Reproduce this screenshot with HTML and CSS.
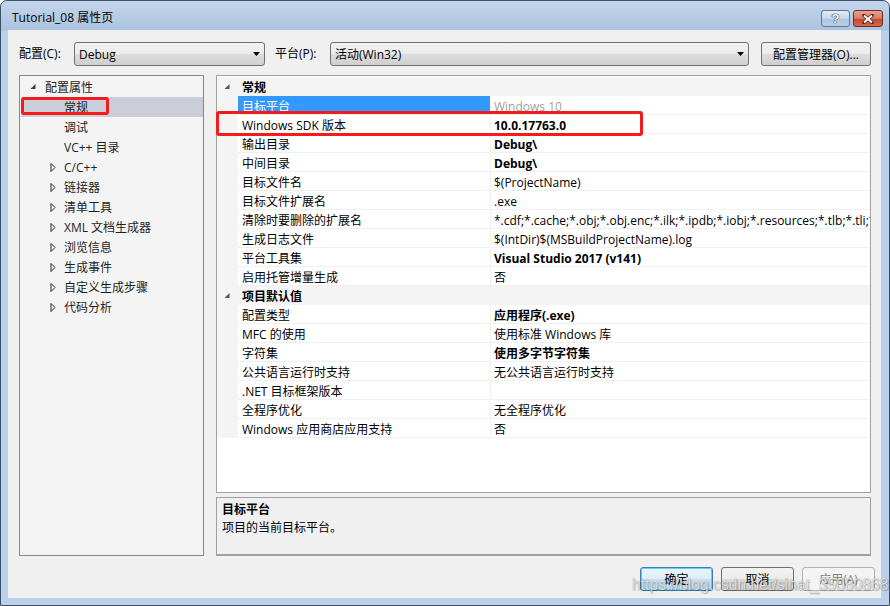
FILE: index.html
```html
<!DOCTYPE html>
<html lang="zh-CN">
<head>
	<meta charset="UTF-8">
	<title>Tutorial_08 属性页</title>
	<link rel="stylesheet" href="styles.css">
</head>
<body>
	<div class="window">
		<div class="titlebar">
			<span class="title">Tutorial_08 属性页</span>
			<div class="caption">
				<span class="cap-btn help">?</span>
				<span class="cap-btn close">
					<svg width="14" height="10" viewBox="0 0 14 10"><path d="M3 1.5 L11 8.5 M11 1.5 L3 8.5" stroke="#5a2020" stroke-width="3.6" stroke-linecap="round"/><path d="M3 1.5 L11 8.5 M11 1.5 L3 8.5" stroke="#fff" stroke-width="2"/></svg>
				</span>
			</div>
		</div>
		<div class="client">
			<div class="toolbar">
				<span class="lbl lbl-config">配置(C):</span>
				<div class="combo combo-config"><span>Debug</span><svg class="arrow" width="7" height="4"><polygon points="0,0 7,0 3.5,4" fill="#000"/></svg></div>
				<span class="lbl lbl-plat">平台(P):</span>
				<div class="combo combo-plat"><span>活动(Win32)</span><svg class="arrow" width="7" height="4"><polygon points="0,0 7,0 3.5,4" fill="#000"/></svg></div>
				<span class="btn btn-mgr">配置管理器(O)...</span>
			</div>

			<div class="main">
				<div class="tree">
					<div class="node l0"><svg class="tw" width="15" height="8"><polygon points="5.5,1 5.5,6 0.5,6" fill="#3c3c3c"/></svg>配置属性</div>
					<div class="node l1 selected"><span class="tw"></span>常规</div>
					<div class="node l1"><span class="tw"></span>调试</div>
					<div class="node l1"><span class="tw"></span>VC++ 目录</div>
					<div class="node l1"><svg class="tw" width="15" height="9"><polygon points="1,0.5 5,4.5 1,8.5" fill="#fff" stroke="#222"/></svg>C/C++</div>
					<div class="node l1"><svg class="tw" width="15" height="9"><polygon points="1,0.5 5,4.5 1,8.5" fill="#fff" stroke="#222"/></svg>链接器</div>
					<div class="node l1"><svg class="tw" width="15" height="9"><polygon points="1,0.5 5,4.5 1,8.5" fill="#fff" stroke="#222"/></svg>清单工具</div>
					<div class="node l1"><svg class="tw" width="15" height="9"><polygon points="1,0.5 5,4.5 1,8.5" fill="#fff" stroke="#222"/></svg>XML 文档生成器</div>
					<div class="node l1"><svg class="tw" width="15" height="9"><polygon points="1,0.5 5,4.5 1,8.5" fill="#fff" stroke="#222"/></svg>浏览信息</div>
					<div class="node l1"><svg class="tw" width="15" height="9"><polygon points="1,0.5 5,4.5 1,8.5" fill="#fff" stroke="#222"/></svg>生成事件</div>
					<div class="node l1"><svg class="tw" width="15" height="9"><polygon points="1,0.5 5,4.5 1,8.5" fill="#fff" stroke="#222"/></svg>自定义生成步骤</div>
					<div class="node l1"><svg class="tw" width="15" height="9"><polygon points="1,0.5 5,4.5 1,8.5" fill="#fff" stroke="#222"/></svg>代码分析</div>
					<div class="mark mark-tree"></div>
				</div>

				<div class="right">
					<div class="grid">
						<div class="cat"><span class="gutter"><svg width="21" height="8"><polygon points="12.5,1 12.5,6 7.5,6" fill="#555"/></svg></span><span class="cat-name">常规</span></div>
						<div class="row"><span class="gutter"></span><span class="name sel">目标平台</span><span class="value dim">Windows 10</span></div>
						<div class="row"><span class="gutter"></span><span class="name">Windows SDK 版本</span><span class="value b">10.0.17763.0</span></div>
						<div class="row"><span class="gutter"></span><span class="name">输出目录</span><span class="value b">Debug\</span></div>
						<div class="row"><span class="gutter"></span><span class="name">中间目录</span><span class="value b">Debug\</span></div>
						<div class="row"><span class="gutter"></span><span class="name">目标文件名</span><span class="value">$(ProjectName)</span></div>
						<div class="row"><span class="gutter"></span><span class="name">目标文件扩展名</span><span class="value">.exe</span></div>
						<div class="row"><span class="gutter"></span><span class="name">清除时要删除的扩展名</span><span class="value">*.cdf;*.cache;*.obj;*.obj.enc;*.ilk;*.ipdb;*.iobj;*.resources;*.tlb;*.tli;*.tlh;*.tmp;*.rsp;*.pgc;*.pgd;*.meta;*.tlog</span></div>
						<div class="row"><span class="gutter"></span><span class="name">生成日志文件</span><span class="value">$(IntDir)$(MSBuildProjectName).log</span></div>
						<div class="row"><span class="gutter"></span><span class="name">平台工具集</span><span class="value b">Visual Studio 2017 (v141)</span></div>
						<div class="row"><span class="gutter"></span><span class="name">启用托管增量生成</span><span class="value">否</span></div>
						<div class="cat"><span class="gutter"><svg width="21" height="8"><polygon points="12.5,1 12.5,6 7.5,6" fill="#555"/></svg></span><span class="cat-name">项目默认值</span></div>
						<div class="row"><span class="gutter"></span><span class="name">配置类型</span><span class="value b">应用程序(.exe)</span></div>
						<div class="row"><span class="gutter"></span><span class="name">MFC 的使用</span><span class="value">使用标准 Windows 库</span></div>
						<div class="row"><span class="gutter"></span><span class="name">字符集</span><span class="value b">使用多字节字符集</span></div>
						<div class="row"><span class="gutter"></span><span class="name">公共语言运行时支持</span><span class="value">无公共语言运行时支持</span></div>
						<div class="row"><span class="gutter"></span><span class="name">.NET 目标框架版本</span><span class="value"></span></div>
						<div class="row"><span class="gutter"></span><span class="name">全程序优化</span><span class="value">无全程序优化</span></div>
						<div class="row"><span class="gutter"></span><span class="name">Windows 应用商店应用支持</span><span class="value">否</span></div>
						<div class="mark mark-grid"></div>
					</div>
					<div class="desc">
						<div class="desc-title">目标平台</div>
						<div class="desc-text">项目的当前目标平台。</div>
					</div>
				</div>
			</div>

			<div class="footer">
				<span class="btn btn-ok">确定</span>
				<span class="btn">取消</span>
				<span class="btn disabled">应用(A)</span>
				<span class="watermark">https://blog.csdn.net/sinat_35080868</span>
			</div>
		</div>
	</div>
</body>
</html>
```

FILE: styles.css
```css
*{
	margin: 0;
	padding: 0;
	box-sizing: border-box;
}
body{
	font-family: "Open Sans", "Noto Sans CJK SC", sans-serif;
	font-size: 12px;
	color: #000;
	background-color: #fff;
}
.window{
	width: 890px;
	height: 606px;
	display: flex;
	flex-direction: column;
	padding: 0 8px 7px 7px;
	border: 1px solid #3d4f66;
	border-radius: 7px 7px 0 0;
	background: linear-gradient(#c3d6ed, #aac3df 29px, #b9d1ea 30px);
	overflow: hidden;
}
.titlebar{
	height: 29px;
	flex: none;
	display: flex;
	justify-content: space-between;
	align-items: flex-start;
}
.title{
	margin: 8px 0 0 4px;
	line-height: 18px;
	color: #000;
}
.caption{
	display: flex;
	gap: 3px;
	margin: 9px -2px 0 0;
}
.cap-btn{
	height: 17px;
	display: flex;
	align-items: center;
	justify-content: center;
	border-radius: 3px;
}
.help{
	width: 29px;
	border: 1px solid #5f7592;
	background: linear-gradient(#e4ecf6, #c5d6ea 50%, #afc5df 51%, #bcd0e8);
	color: #fff;
	font-family: "Liberation Sans", sans-serif;
	font-weight: bold;
	font-size: 13px;
	text-shadow: 0 0 1px #33465d, 0 0 1px #33465d, 0 0 1px #33465d;
}
.close{
	width: 30px;
	border: 1px solid #6e2a22;
	background: linear-gradient(#e8a592, #d7775f 50%, #c5452a 51%, #d4694c);
}
.client{
	flex: 1;
	min-width: 0;
	display: flex;
	flex-direction: column;
	padding: 12px 10px 0 11px;
	background-color: #f0f0f0;
}
.toolbar{
	height: 24px;
	display: flex;
	align-items: center;
}
.lbl{
	line-height: 18px;
	white-space: nowrap;
}
.lbl-config{
	width: 55px;
}
.lbl-plat{
	width: 55px;
	margin-left: 10px;
}
.combo{
	height: 24px;
	flex: none;
	display: flex;
	align-items: center;
	justify-content: space-between;
	padding: 0 4px 0 4px;
	border: 1px solid #707070;
	border-radius: 3px;
	background: linear-gradient(#f2f2f2, #ebebeb 50%, #dddddd 51%, #cfcfcf);
}
.combo-config{
	width: 191px;
}
.combo-plat{
	width: 419px;
}
.btn{
	height: 24px;
	width: 73px;
	flex: none;
	display: flex;
	align-items: center;
	justify-content: center;
	border: 1px solid #707070;
	border-radius: 3px;
	background: linear-gradient(#f2f2f2, #ebebeb 50%, #dddddd 51%, #cfcfcf);
	white-space: nowrap;
}
.btn-mgr{
	width: 110px;
	margin-left: 12px;
}
.main{
	height: 481px;
	flex: none;
	margin-top: 9px;
	display: flex;
	gap: 12px;
}
.tree{
	position: relative;
	width: 185px;
	flex: none;
	padding-top: 1px;
	border: 1px solid #828790;
	background-color: #f4f4f4;
	color: #1e1e1e;
}
.node{
	height: 20px;
	display: flex;
	align-items: center;
	white-space: nowrap;
}
.node.l0{
	padding-left: 10px;
}
.node.l1{
	padding-left: 30px;
}
.node .tw{
	width: 15px;
	flex: none;
}
.node.l1 .tw{
	width: 14px;
}
.node.selected{
	margin-left: 1px;
	padding-left: 29px;
	background-color: #cbcdd8;
}
.mark{
	position: absolute;
	border: 3px solid #f21c1c;
	border-radius: 3px;
}
.mark-tree{
	left: 1px;
	top: 21px;
	width: 88px;
	height: 18px;
}
.mark-grid{
	left: -1px;
	top: 35px;
	width: 427px;
	height: 25px;
}
.right{
	flex: 1;
	min-width: 0;
	display: flex;
	flex-direction: column;
	gap: 4px;
}
.grid{
	position: relative;
	height: 418px;
	flex: none;
	padding-top: 1px;
	border: 1px solid #a0a0a0;
	background-color: #fff;
}
.row, .cat{
	height: 19px;
	display: flex;
}
.gutter{
	width: 21px;
	flex: none;
	display: flex;
	align-items: center;
	background-color: #f4f4f4;
}
.cat{
	background-color: #f4f4f4;
}
.cat-name{
	padding-left: 4px;
	line-height: 21px;
	font-weight: bold;
}
.name{
	width: 253px;
	height: 19px;
	flex: none;
	padding: 1px 0 0 4px;
	line-height: 20px;
	border-right: 1px solid #f0f0f0;
	border-bottom: 1px solid #f0f0f0;
	white-space: nowrap;
}
.name.sel{
	background-color: #3399ff;
	color: #fff;
}
.value{
	flex: 1;
	min-width: 0;
	height: 19px;
	padding: 1px 0 0 3px;
	line-height: 20px;
	border-bottom: 1px solid #f0f0f0;
	white-space: nowrap;
	overflow: hidden;
}
.value.b{
	font-weight: bold;
}
.value.dim{
	color: #a0a0a0;
}
.desc{
	flex: 1;
	padding: 3px 5px;
	border: 1px solid #a0a0a0;
	border-bottom-width: 2px;
	background-color: #f0f0f0;
	line-height: 18px;
}
.desc-title{
	font-weight: bold;
}
.footer{
	position: relative;
	display: flex;
	justify-content: flex-end;
	gap: 8px;
	margin: 11px -4px 0 0;
}
.btn-ok{
	border-color: #3c7fb1;
	box-shadow: inset 0 0 0 1px #5fd0f5;
	background: linear-gradient(#eaf5fc, #dcecf7 50%, #c9e0f1 51%, #bdd6ea);
}
.btn.disabled{
	border-color: #adb2b5;
	background: #f4f4f4;
	color: #838383;
}
.watermark{
	position: absolute;
	left: 613px;
	top: 9px;
	font-family: "Liberation Sans", sans-serif;
	font-size: 15.7px;
	line-height: 18px;
	color: rgba(255,255,255,.75);
	text-shadow: 0 0 1px rgba(0,0,0,.45), 1px 1px 1px rgba(0,0,0,.2);
	white-space: nowrap;
}
```
